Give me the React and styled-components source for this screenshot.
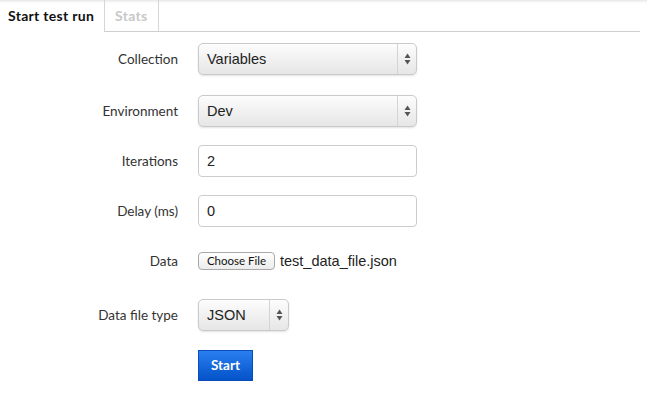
import styled, { createGlobalStyle } from "styled-components";

const GlobalStyle = createGlobalStyle`
  html, body {
    margin: 0;
    padding: 0;
    background: #fff;
  }
  body {
    font-family: Lato, "Open Sans", sans-serif;
    color: #333;
  }
`;

const rows = [
  { label: "Collection", type: "select", value: "Variables", top: 10 },
  { label: "Environment", type: "select", value: "Dev", top: 20 },
  { label: "Iterations", type: "input", value: "2", top: 18 },
  { label: "Delay (ms)", type: "input", value: "0", top: 18 },
  { label: "Data", type: "file", value: "test_data_file.json", top: 18 },
  { label: "Data file type", type: "select", value: "JSON", top: 22, small: true },
];

function Arrows() {
  return (
    <svg width="7" height="12" viewBox="0 0 7 12">
      <path d="M3.5 0.5 L6.5 5 L0.5 5 Z" fill="#555" />
      <path d="M3.5 11.5 L6.5 7 L0.5 7 Z" fill="#555" />
    </svg>
  );
}

function Control({ row }) {
  if (row.type === "select") {
    return (
      <Select small={row.small}>
        <SelectValue>{row.value}</SelectValue>
        <SelectArrows>
          <Arrows />
        </SelectArrows>
      </Select>
    );
  }
  if (row.type === "file") {
    return (
      <FileWrap>
        <FileButton>Choose File</FileButton>
        <FileName>{row.value}</FileName>
      </FileWrap>
    );
  }
  return <TextInput defaultValue={row.value} />;
}

export default function App() {
  return (
    <Page>
      <GlobalStyle />
      <TabBar>
        <Tab active>Start test run</Tab>
        <Tab>Stats</Tab>
        <TabFill />
      </TabBar>
      <Form>
        {rows.map((row) => (
          <Row key={row.label} top={row.top}>
            <Label>{row.label}</Label>
            <Control row={row} />
          </Row>
        ))}
        <Row top={18}>
          <Label />
          <StartButton>Start</StartButton>
        </Row>
      </Form>
    </Page>
  );
}

const Page = styled.div`
  width: 647px;
  height: 395px;
  position: relative;
  box-shadow: inset 0 3px 3px -2px rgba(0, 0, 0, 0.12);
`;

const TabBar = styled.div`
  display: flex;
  height: 33px;
  padding-right: 7px;
`;

const Tab = styled.div`
  height: 32px;
  box-sizing: border-box;
  font-family: Lato, "Open Sans", sans-serif;
  font-weight: 700;
  font-size: 14px;
  letter-spacing: 0.3px;
  line-height: 32px;
  color: ${({ active }) => (active ? "#111" : "#c8c8c8")};
  border-left: ${({ active }) => (active ? "none" : "1px solid #d6d6d6")};
  border-right: ${({ active }) => (active ? "none" : "1px solid #d6d6d6")};
  border-bottom: ${({ active }) => (active ? "none" : "1px solid #cfcfcf")};
  width: ${({ active }) => (active ? "104px" : "55px")};
  padding-left: ${({ active }) => (active ? "8px" : "10px")};
  white-space: nowrap;
`;

const TabFill = styled.div`
  flex: 1;
  height: 32px;
  box-sizing: border-box;
  border-bottom: 1px solid #cfcfcf;
`;

const Form = styled.div`
  display: flex;
  flex-direction: column;
`;

const Row = styled.div`
  display: flex;
  align-items: center;
  gap: 20px;
  margin-top: ${({ top }) => top}px;
  min-height: 32px;
`;

const Label = styled.div`
  width: 178px;
  text-align: right;
  font-size: 13.5px;
  color: #333;
`;

const Select = styled.div`
  width: ${({ small }) => (small ? "91px" : "219px")};
  height: 32px;
  box-sizing: border-box;
  display: flex;
  align-items: center;
  border: 1px solid #cacaca;
  border-radius: 5px;
  background: linear-gradient(#fdfdfd, #f1f1f1 50%, #e6e6e6);
  box-shadow: 0 1px 2px rgba(0, 0, 0, 0.12);
`;

const SelectValue = styled.div`
  flex: 1;
  padding-left: 8px;
  font-family: "Liberation Sans", Arial, sans-serif;
  font-size: 14.5px;
  color: #222;
`;

const SelectArrows = styled.div`
  width: 18px;
  height: 100%;
  display: flex;
  align-items: center;
  justify-content: center;
  border-left: 1px solid #d4d4d4;
`;

const TextInput = styled.input`
  width: 219px;
  height: 32px;
  box-sizing: border-box;
  border: 1px solid #cccccc;
  border-radius: 4px;
  padding: 0 8px;
  font-family: "Liberation Sans", Arial, sans-serif;
  font-size: 14.5px;
  color: #222;
  outline: none;
`;

const FileWrap = styled.div`
  display: flex;
  align-items: center;
  gap: 5px;
`;

const FileButton = styled.div`
  width: 77px;
  height: 18px;
  box-sizing: border-box;
  border: 1px solid #a9a9a9;
  border-radius: 4px;
  background: linear-gradient(#ffffff, #ececec);
  font-family: Lato, "Open Sans", sans-serif;
  font-size: 11.5px;
  line-height: 16px;
  text-align: center;
  color: #111;
`;

const FileName = styled.span`
  font-family: "Liberation Sans", Arial, sans-serif;
  font-size: 14.5px;
  color: #222;
`;

const StartButton = styled.div`
  width: 55px;
  height: 31px;
  box-sizing: border-box;
  background: linear-gradient(#2a7ff0, #0452c8);
  border: 1px solid #0a4db8;
  color: #fff;
  font-family: Lato, "Open Sans", sans-serif;
  font-weight: 700;
  font-size: 13.5px;
  line-height: 29px;
  text-align: center;
`;
